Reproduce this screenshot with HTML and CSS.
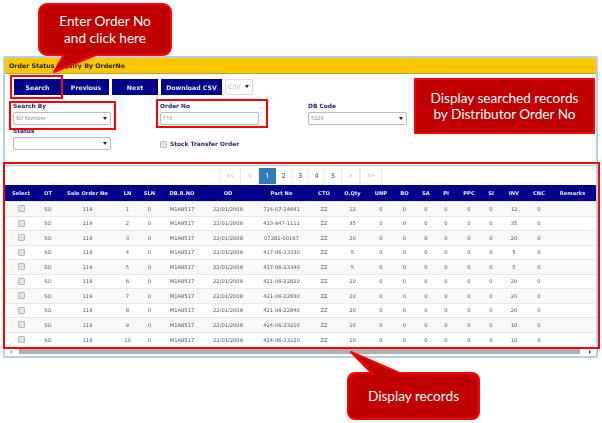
FILE: index.html
```html
<!DOCTYPE html>
<html lang="en">
<head>
  <meta charset="UTF-8">
  <title>Order Status Inquiry</title>
  <link rel="stylesheet" href="styles.css">
</head>
<body>
  <div class="panel">
    <div class="panel-title">Order Status Inquiry By OrderNo</div>

    <div class="toolbar">
      <button class="btn btn-search">Search</button>
      <button class="btn btn-prev">Previous</button>
      <button class="btn btn-next">Next</button>
      <button class="btn btn-csv">Download CSV</button>
      <div class="select select-csv"><span class="muted">CSV</span><i class="caret"></i></div>
    </div>

    <div class="form">
      <div class="col col-a">
        <label>Search By</label>
        <div class="select"><span>SO Number</span><i class="caret"></i></div>
        <label class="status-label">Status</label>
        <div class="select"><span></span><i class="caret"></i></div>
      </div>
      <div class="col col-b">
        <label>Order No</label>
        <div class="input">119</div>
        <div class="check-row"><i class="checkbox"></i><label>Stock Transfer Order</label></div>
      </div>
      <div class="col col-c">
        <label>DB Code</label>
        <div class="select"><span>522K</span><i class="caret"></i></div>
      </div>
    </div>

    <div class="records">
      <div class="pager">
        <a class="off wide">&lt;&lt;</a><a class="off mid">&lt;</a><a class="on">1</a><a>2</a><a>3</a><a>4</a><a>5</a><a class="off mid">&gt;</a><a class="off wide">&gt;&gt;</a>
      </div>
      <table>
        <colgroup>
          <col class="w32"><col class="w22"><col class="w57"><col class="w23"><col class="w21"><col class="w44"><col class="w48"><col class="w59"><col class="w26"><col class="w31"><col class="w26"><col class="w21"><col class="w22"><col class="w18"><col class="w28"><col class="w16"><col class="w30"><col class="w20"><col class="w47">
        </colgroup>
        <thead>
          <tr><th>Select</th><th>OT</th><th>Sale Order No</th><th>LN</th><th>SLN</th><th>DB.R.NO</th><th>OD</th><th>Part No</th><th>CTO</th><th>O.Qty</th><th>UNP</th><th>BO</th><th>SA</th><th>PI</th><th>PPC</th><th>SI</th><th>INV</th><th>CNC</th><th>Remarks</th></tr>
        </thead>
        <tbody>
          <tr><td><i class="checkbox"></i></td><td>SO</td><td>119</td><td>1</td><td>0</td><td>M1A8517</td><td>22/01/2008</td><td>714-07-14641</td><td>ZZ</td><td>12</td><td>0</td><td>0</td><td>0</td><td>0</td><td>0</td><td>0</td><td>12</td><td>0</td><td></td></tr>
          <tr><td><i class="checkbox"></i></td><td>SO</td><td>119</td><td>2</td><td>0</td><td>M1A8517</td><td>22/01/2008</td><td>423-847-1111</td><td>ZZ</td><td>35</td><td>0</td><td>0</td><td>0</td><td>0</td><td>0</td><td>0</td><td>35</td><td>0</td><td></td></tr>
          <tr><td><i class="checkbox"></i></td><td>SO</td><td>119</td><td>3</td><td>0</td><td>M1A8517</td><td>22/01/2008</td><td>07281-00167</td><td>ZZ</td><td>20</td><td>0</td><td>0</td><td>0</td><td>0</td><td>0</td><td>0</td><td>20</td><td>0</td><td></td></tr>
          <tr><td><i class="checkbox"></i></td><td>SO</td><td>119</td><td>4</td><td>0</td><td>M1A8517</td><td>22/01/2008</td><td>417-06-23330</td><td>ZZ</td><td>5</td><td>0</td><td>0</td><td>0</td><td>0</td><td>0</td><td>0</td><td>5</td><td>0</td><td></td></tr>
          <tr><td><i class="checkbox"></i></td><td>SO</td><td>119</td><td>5</td><td>0</td><td>M1A8517</td><td>22/01/2008</td><td>417-06-23340</td><td>ZZ</td><td>5</td><td>0</td><td>0</td><td>0</td><td>0</td><td>0</td><td>0</td><td>5</td><td>0</td><td></td></tr>
          <tr><td><i class="checkbox"></i></td><td>SO</td><td>119</td><td>6</td><td>0</td><td>M1A8517</td><td>22/01/2008</td><td>421-06-22820</td><td>ZZ</td><td>20</td><td>0</td><td>0</td><td>0</td><td>0</td><td>0</td><td>0</td><td>20</td><td>0</td><td></td></tr>
          <tr><td><i class="checkbox"></i></td><td>SO</td><td>119</td><td>7</td><td>0</td><td>M1A8517</td><td>22/01/2008</td><td>421-06-22830</td><td>ZZ</td><td>20</td><td>0</td><td>0</td><td>0</td><td>0</td><td>0</td><td>0</td><td>20</td><td>0</td><td></td></tr>
          <tr><td><i class="checkbox"></i></td><td>SO</td><td>119</td><td>8</td><td>0</td><td>M1A8517</td><td>22/01/2008</td><td>421-06-22840</td><td>ZZ</td><td>20</td><td>0</td><td>0</td><td>0</td><td>0</td><td>0</td><td>0</td><td>20</td><td>0</td><td></td></tr>
          <tr><td><i class="checkbox"></i></td><td>SO</td><td>119</td><td>9</td><td>0</td><td>M1A8517</td><td>22/01/2008</td><td>424-06-23210</td><td>ZZ</td><td>10</td><td>0</td><td>0</td><td>0</td><td>0</td><td>0</td><td>0</td><td>10</td><td>0</td><td></td></tr>
          <tr><td><i class="checkbox"></i></td><td>SO</td><td>119</td><td>10</td><td>0</td><td>M1A8517</td><td>22/01/2008</td><td>424-06-23220</td><td>ZZ</td><td>10</td><td>0</td><td>0</td><td>0</td><td>0</td><td>0</td><td>0</td><td>10</td><td>0</td><td></td></tr>
        </tbody>
      </table>
      <div class="scrollbar"><i class="arrow-l"></i><div class="thumb"></div><i class="arrow-r"></i></div>
    </div>
  </div>

  <!-- red annotations on top of the screenshot -->
  <div class="mark mark-search"></div>
  <div class="mark mark-by"></div>
  <div class="mark mark-order"></div>
  <div class="mark mark-table"></div>

  <div class="note note-enter">Enter Order No<br>and click here</div>
  <div class="note note-display">Display searched records<br>by Distributor Order No</div>
  <div class="note note-records">Display records</div>

  <svg class="tails" width="602" height="423" viewBox="0 0 602 423">
    <path d="M64 54.5 L54 72 L97 54.5" fill="#c00000" stroke="#ff0000" stroke-width="2" stroke-linejoin="round"/>
    <path d="M373 374.5 L351 352 L403 374.5" fill="#c00000" stroke="#ff0000" stroke-width="2" stroke-linejoin="round"/>
  </svg>
</body>
</html>
```

FILE: styles.css
```css
html, body {
  margin: 0;
  padding: 0;
}

body {
  width: 602px;
  height: 423px;
  overflow: hidden;
  background: #fff;
  font-family: "Open Sans", sans-serif;
  font-size: 6px;
  color: #555;
  position: relative;
  filter: blur(0.35px);
}

.panel {
  width: 591px;
  height: 298px;
  margin: 56px 0 0 3px;
  border: 2px solid #b5d0ea;
  border-radius: 2px;
  display: flex;
  flex-direction: column;
}

.panel-title {
  height: 16px;
  line-height: 16px;
  padding-left: 4px;
  background: #fcc800;
  border-bottom: 1px solid #b9a24a;
  box-sizing: border-box;
  font-family: "DejaVu Sans", sans-serif;
  font-weight: bold;
  font-size: 6.3px;
  color: #222;
}

.toolbar {
  display: flex;
  align-items: center;
  gap: 2px;
  padding: 5px 0 0 9px;
  height: 16px;
}

.btn {
  height: 16px;
  padding: 0;
  border: none;
  background: #00008b;
  color: #e8e8f8;
  font-family: "DejaVu Sans", sans-serif;
  font-size: 6.2px;
  font-weight: bold;
}

.btn-search { width: 47px; }
.btn-prev { width: 46px; }
.btn-next { width: 46px; margin-left: 1px; }
.btn-csv { width: 61px; margin-left: 1px; }

.select, .input {
  height: 11px;
  line-height: 11px;
  border: 1px solid #bbb;
  border-radius: 2px;
  padding: 0 2px;
  display: flex;
  justify-content: space-between;
  align-items: center;
  background: #fff;
  font-size: 5.5px;
  color: #888;
}

.select-csv {
  width: 22px;
  height: 14px;
  margin: -1px 0 0 1px;
  font-size: 7px;
  border-color: #ddd;
}

.muted { color: #bbb; }

.caret {
  width: 0;
  height: 0;
  margin-right: 1px;
  border-left: 2px solid transparent;
  border-right: 2px solid transparent;
  border-top: 3px solid #222;
}

.form {
  display: flex;
  height: 70px;
  padding-top: 7px;
  box-sizing: border-box;
}

.form label {
  display: block;
  height: 8px;
  line-height: 8px;
  font-family: "DejaVu Sans", sans-serif;
  font-size: 5.9px;
  font-weight: bold;
  color: #1b2a7b;
}

.form .select, .form .input {
  margin-top: 2px;
}

.col-a { width: 98px; margin-left: 8px; }
.col-b { width: 99px; margin-left: 49px; }
.col-c { width: 99px; margin-left: 49px; }

.form .status-label { margin-top: 2px; }

.check-row {
  display: flex;
  align-items: center;
  gap: 3px;
  margin-top: 15px;
}

.checkbox {
  display: block;
  width: 5px;
  height: 5px;
  border: 1px solid #bbb;
  border-radius: 1px;
  background: #e4e4e4;
}

.records {
  flex: 1;
  border-top: 1px solid #b5d0ea;
  display: flex;
  flex-direction: column;
}

.pager {
  height: 19px;
  display: flex;
  justify-content: center;
  padding-top: 2px;
  box-sizing: border-box;
}

.pager a {
  width: 16.5px;
  height: 16px;
  line-height: 16px;
  border-right: 1px solid #eee;
  box-sizing: border-box;
  text-align: center;
  color: #337ab7;
  font-size: 6.5px;
  font-weight: 600;
}

.pager a.mid { width: 18px; }
.pager a.wide { width: 22.5px; border-left: 1px solid #eee; }
.pager a.off { color: #bbb; }

.pager a.on {
  background: #337ab7;
  color: #fff;
  border-color: #337ab7;
}

table {
  width: 591px;
  border-collapse: collapse;
  table-layout: fixed;
}

.w16 { width: 16px; }
.w18 { width: 18px; }
.w20 { width: 20px; }
.w21 { width: 21px; }
.w22 { width: 22px; }
.w23 { width: 23px; }
.w26 { width: 26px; }
.w28 { width: 28px; }
.w30 { width: 30px; }
.w31 { width: 31px; }
.w32 { width: 32px; }
.w44 { width: 44px; }
.w47 { width: 47px; }
.w48 { width: 48px; }
.w57 { width: 57px; }
.w59 { width: 59px; }

th {
  height: 16px;
  padding: 0;
  background: #00008b;
  color: #e8e8f8;
  font-family: "DejaVu Sans", sans-serif;
  font-size: 5.2px;
  font-weight: bold;
  text-align: center;
}

td {
  height: 14.5px;
  padding: 0;
  box-sizing: border-box;
  border-top: 1px solid #e8e8e8;
  text-align: center;
  font-family: "DejaVu Sans", sans-serif;
  font-size: 5.2px;
  color: #555;
}

tbody tr:nth-child(odd) td { background: #f9f9f9; }

td .checkbox { margin: 0 auto; }

.scrollbar {
  display: flex;
  align-items: center;
  height: 5px;
  margin-top: auto;
  margin-bottom: 2px;
  padding: 0 5px;
}

.thumb {
  flex: 1;
  height: 5px;
  margin: 0 9px 0 7px;
  background: #b0b0b0;
}

.arrow-l, .arrow-r {
  width: 0;
  height: 0;
  border-top: 2px solid transparent;
  border-bottom: 2px solid transparent;
}

.arrow-l { border-right: 2px solid #999; }
.arrow-r { border-left: 2px solid #333; }

.mark {
  position: absolute;
  box-sizing: border-box;
  border: 2px solid #f00;
}

.mark-search { left: 10px; top: 75px; width: 53px; height: 24px; }
.mark-by { left: 9px; top: 101px; width: 107px; height: 29px; }
.mark-order { left: 156px; top: 99px; width: 112px; height: 29px; }
.mark-table { left: 3px; top: 162px; width: 597px; height: 187px; }

.tails {
  position: absolute;
  left: 0;
  top: 0;
}

.note {
  position: absolute;
  box-sizing: border-box;
  display: flex;
  align-items: center;
  justify-content: center;
  text-align: center;
  background: #c00000;
  border: 2px solid #f00;
  color: #fff;
  font-family: Lato, sans-serif;
  font-size: 13.6px;
  line-height: 16.5px;
}

.note-enter { left: 38px; top: 3px; width: 134px; height: 53px; border-radius: 9px; }
.note-display { left: 414px; top: 78px; width: 181px; height: 56px; border-radius: 1px; }
.note-records { left: 347px; top: 372px; width: 133px; height: 48px; border-radius: 8px; }
```
